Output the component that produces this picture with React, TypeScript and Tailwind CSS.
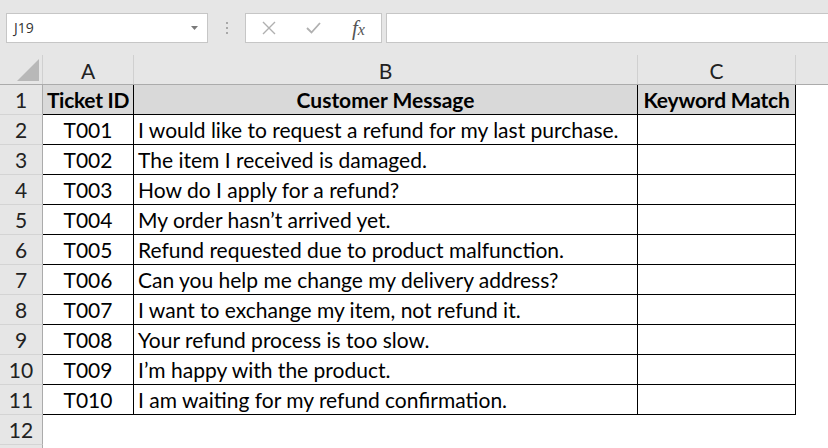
import React from "react";

// Sheet data
const tickets = [
  { id: "T001", msg: "I would like to request a refund for my last purchase." },
  { id: "T002", msg: "The item I received is damaged." },
  { id: "T003", msg: "How do I apply for a refund?" },
  { id: "T004", msg: "My order hasn\u2019t arrived yet." },
  { id: "T005", msg: "Refund requested due to product malfunction." },
  { id: "T006", msg: "Can you help me change my delivery address?" },
  { id: "T007", msg: "I want to exchange my item, not refund it." },
  { id: "T008", msg: "Your refund process is too slow." },
  { id: "T009", msg: "I\u2019m happy with the product." },
  { id: "T010", msg: "I am waiting for my refund confirmation." },
];

function RowHead({ n }: { n?: number }) {
  return (
    <div className="w-[43px] shrink-0 h-full bg-[#e6e6e6] border-r border-r-[#ababab] border-b border-b-[#d4d4d4] flex items-end justify-center pb-[1px] text-[#222]">
      {n}
    </div>
  );
}

export default function App() {
  return (
    <div className="w-[828px] h-[448px] overflow-hidden bg-white text-black font-['Lato',sans-serif] text-[21px] leading-[26px]">
      {/* Formula bar */}
      <div className="h-[55px] bg-[#e6e6e6] pt-[13px] flex items-start">
        <div className="ml-[6px] w-[202px] h-[30px] bg-white border border-[#c6c6c6] flex items-center justify-between pl-[7px] pr-[9px]">
          <span className="text-[14px] leading-none text-[#333] font-['Open_Sans',sans-serif]">J19</span>
          <svg width="7" height="4" viewBox="0 0 7 4">
            <path d="M0 0h7L3.5 4z" fill="#7a7a7a" />
          </svg>
        </div>
        <div className="w-[37px] h-[30px] flex flex-col items-center justify-center gap-[3px]">
          <span className="w-[2px] h-[2px] bg-[#a8a8a8]" />
          <span className="w-[2px] h-[2px] bg-[#a8a8a8]" />
          <span className="w-[2px] h-[2px] bg-[#a8a8a8]" />
        </div>
        <div className="w-[137px] h-[30px] bg-white border border-[#c6c6c6] flex">
          <div className="w-[45px] flex items-center justify-center">
            <svg width="14" height="14" viewBox="0 0 14 14">
              <path d="M1 1L13 13M13 1L1 13" stroke="#b0b0b0" strokeWidth="1.4" />
            </svg>
          </div>
          <div className="w-[45px] flex items-center justify-center">
            <svg width="15" height="12" viewBox="0 0 15 12">
              <path d="M1 6L5.5 10.5L14 1" stroke="#b0b0b0" strokeWidth="1.8" fill="none" />
            </svg>
          </div>
          <div className="w-[45px] flex items-center justify-center">
            <span className="font-['Liberation_Serif',serif] italic text-[21px] text-[#555] leading-none">
              f<span className="text-[16px]">x</span>
            </span>
          </div>
        </div>
        <div className="ml-[4px] flex-1 h-[30px] bg-white border border-[#c6c6c6] border-r-0" />
      </div>

      {/* Column headers */}
      <div className="h-[30px] flex bg-[#e6e6e6] border-b border-b-[#ababab] text-[#222]">
        <div className="w-[43px] shrink-0 border-r border-r-[#d0d0d0] relative">
          <svg className="absolute left-[17px] top-[4px]" width="22" height="22" viewBox="0 0 22 22">
            <path d="M22 0V22H0z" fill="#b8b8b8" />
          </svg>
        </div>
        <div className="w-[91px] shrink-0 border-r border-r-[#d0d0d0] flex items-end justify-center">A</div>
        <div className="w-[504px] shrink-0 border-r border-r-[#d0d0d0] flex items-end justify-center">B</div>
        <div className="w-[158px] shrink-0 border-r border-r-[#d0d0d0] flex items-end justify-center">C</div>
        <div className="flex-1" />
      </div>

      {/* Row 1: headers */}
      <div className="h-[30px] flex">
        <RowHead n={1} />
        <div className="w-[91px] shrink-0 bg-[#d9d9d9] border-r border-b border-black flex items-end justify-center pb-[1px] font-bold whitespace-nowrap tracking-[-0.3px]">
          Ticket ID
        </div>
        <div className="w-[504px] shrink-0 bg-[#d9d9d9] border-r border-b border-black flex items-end justify-center pb-[1px] font-bold">
          Customer Message
        </div>
        <div className="w-[158px] shrink-0 bg-[#d9d9d9] border-r border-b border-black flex items-end justify-center pb-[1px] font-bold whitespace-nowrap tracking-[-0.2px]">
          Keyword Match
        </div>
        <div className="flex-1" />
      </div>

      {tickets.map((t, i) => (
        <div key={t.id} className="h-[30px] flex">
          <RowHead n={i + 2} />
          <div className="w-[91px] shrink-0 border-r border-b border-black flex items-end justify-center pb-[1px]">
            {t.id}
          </div>
          <div className="w-[504px] shrink-0 border-r border-b border-black flex items-end pl-[4px] pb-[1px] whitespace-nowrap">
            {t.msg}
          </div>
          <div className="w-[158px] shrink-0 border-r border-b border-black" />
          <div className="flex-1" />
        </div>
      ))}

      <div className="h-[30px] flex">
        <RowHead n={12} />
        <div className="flex-1" />
      </div>
      <div className="h-[30px] flex">
        <RowHead />
        <div className="flex-1" />
      </div>
    </div>
  );
}
